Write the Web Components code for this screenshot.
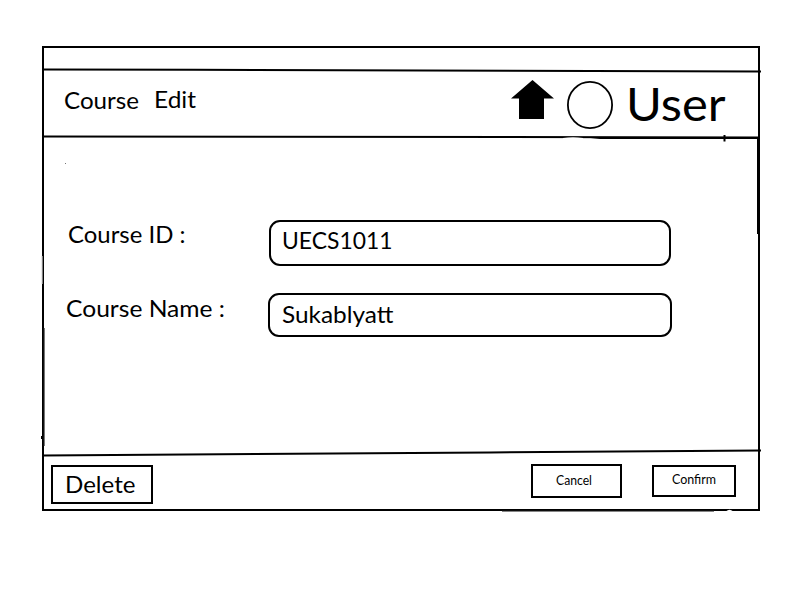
<!DOCTYPE html>
<html lang="en">
<head>
<meta charset="utf-8">
<title>Course Edit</title>
<style>
html,body{margin:0;background:#fff;color:#000;font-family:Lato,"Liberation Sans",sans-serif}
body{width:800px;height:600px;overflow:hidden}
</style>
</head>
<body>
<course-page></course-page>
<script>
// One line of text fitted to a given advance width; "base" is the baseline inside the box.
class FitText extends HTMLElement {
  connectedCallback() {
    const w = this.getAttribute('w'), h = this.getAttribute('h'), b = this.getAttribute('base'), s = this.getAttribute('size');
    this.attachShadow({mode:'open'}).innerHTML = `
      <style>:host{display:block;flex:none;width:${w}px;height:${h}px}svg{display:block;overflow:visible}
      text{font-family:Lato,"Liberation Sans",sans-serif;font-size:${s}px;white-space:pre}</style>
      <svg width="${w}" height="${h}"><text x="0" y="${b}" textLength="${w}" lengthAdjust="spacingAndGlyphs"></text></svg>`;
    this.shadowRoot.querySelector('text').textContent = this.getAttribute('label');
  }
}
customElements.define('fit-text', FitText);

// Hand-drawn divider, running slightly off the horizontal.
class SketchRule extends HTMLElement {
  connectedCallback() {
    const h = this.getAttribute('h');
    this.attachShadow({mode:'open'}).innerHTML = `
      <style>:host{display:block;flex:none;height:${h}px}svg{display:block;overflow:visible}</style>
      <svg width="714" height="${h}"><path d="${this.getAttribute('d')}" fill="none" stroke="#000" stroke-width="2"/></svg>`;
  }
}
customElements.define('sketch-rule', SketchRule);

class OutlineBox extends HTMLElement {
  constructor() {
    super();
    this.attachShadow({mode:'open'}).innerHTML = `
      <style>:host{display:flex;flex:none;box-sizing:border-box;border:2px solid #000}
      :host([round]){border-radius:11px}</style><slot></slot>`;
  }
}
customElements.define('outline-box', OutlineBox);

class UserBadge extends HTMLElement {
  constructor() {
    super();
    this.attachShadow({mode:'open'}).innerHTML = `
      <style>:host{display:flex;align-items:flex-start}
      svg{display:block;flex:none}.home{margin:8px 13px 0 0}.face{margin:9px 13px 0 0}</style>
      <svg class="home" width="43" height="39"><path d="M21.5 0 43 18.5H33V39H8V18.5H0Z"/></svg>
      <svg class="face" width="46" height="48"><ellipse cx="23" cy="24" rx="22.1" ry="23.1" fill="none" stroke="#000" stroke-width="1.8"/></svg>
      <slot></slot>`;
  }
}
customElements.define('user-badge', UserBadge);

class FormRow extends HTMLElement {
  constructor() {
    super();
    this.attachShadow({mode:'open'}).innerHTML = `
      <style>:host{display:flex;align-items:flex-start}.label{width:var(--label-width);flex:none}</style>
      <div class="label"><slot name="label"></slot></div><slot></slot>`;
  }
}
customElements.define('form-row', FormRow);

class CoursePage extends HTMLElement {
  constructor() {
    super();
    this.attachShadow({mode:'open'}).innerHTML = `
    <style>
      :host{display:block;padding:46px 0 0 42px}
      .frame{position:relative;box-sizing:border-box;width:718px;height:465px;border:2px solid #000;display:flex;flex-direction:column}
      .strip{height:21px;flex:none}
      header{height:63px;flex:none;display:flex;align-items:flex-start;padding-left:20px}
      header .edit{margin-left:15px}
      user-badge{margin-left:315px}
      main{height:311px;flex:none;box-sizing:border-box;padding:82px 0 0 22px;display:flex;flex-direction:column;gap:27px}
      .id{--label-width:201px;padding-left:2px}
      .name{--label-width:202px}
      .id outline-box{width:402px;height:46px;padding-left:10.5px}
      .name outline-box{width:404px;height:44px;padding-left:12px}
      footer{display:flex;align-items:flex-start;padding:7px 0 0 7px}
      .delete{width:102px;height:39px;margin-top:1px;padding-left:12px}
      .cancel{width:91px;height:34px;margin-left:378px;padding-left:23px}
      .confirm{width:84px;height:32px;margin:1px 0 0 30px;padding-left:18px}
      .marks{position:absolute;left:-44px;top:-48px;overflow:visible;pointer-events:none}
    </style>
    <div class="frame">
      <div class="strip"></div>
      <sketch-rule h="3" d="M-1 .6 L150 .8 L717 2.5"></sketch-rule>
      <header>
        <fit-text label="Course" w="75" h="63" base="37" size="23.5"></fit-text>
        <fit-text class="edit" label="Edit" w="42" h="63" base="36" size="23.5"></fit-text>
        <user-badge><fit-text label="User" w="99.5" h="63" base="49" size="46.8"></fit-text></user-badge>
      </header>
      <sketch-rule h="3" d="M-1 1.4 L714 2.4"></sketch-rule>
      <main>
        <form-row class="id">
          <fit-text slot="label" label="Course ID :" w="117.5" h="46" base="23" size="23.5"></fit-text>
          <outline-box round><fit-text label="UECS1011" w="110.5" h="40" base="27" size="23.5"></fit-text></outline-box>
        </form-row>
        <form-row class="name">
          <fit-text slot="label" label="Course Name :" w="159" h="44" base="24" size="23.5"></fit-text>
          <outline-box round><fit-text label="Sukablyatt" w="111.5" h="40" base="28" size="23.5"></fit-text></outline-box>
        </form-row>
      </main>
      <sketch-rule h="8" d="M-1 6.4 L446 3.4 L717 1.5"></sketch-rule>
      <footer>
        <outline-box class="delete"><fit-text label="Delete" w="70.5" h="33" base="26" size="23.5"></fit-text></outline-box>
        <outline-box class="cancel"><fit-text label="Cancel" w="36" h="28" base="19" size="12.4"></fit-text></outline-box>
        <outline-box class="confirm"><fit-text label="Confirm" w="44" h="28" base="17" size="12.4"></fit-text></outline-box>
      </footer>
      <svg class="marks" width="800" height="600" fill="none">
        <path d="M586 137.5 L600 136.9H758V138.9H600Z" fill="#000"/>
        <path d="M724.5 135v6.5" stroke="#000" stroke-width="2"/>
        <path d="M758 137V234" stroke="#000" stroke-width="2"/>
        <path d="M563 138.9q10-1.6 20 0" stroke="#fff" stroke-width="1.6"/>
        <path d="M44.3 328V446" stroke="#555" stroke-width="1"/>
        <path d="M42.2 256V284" stroke="#bbb" stroke-width="1"/>
        <path d="M41.5 436v3" stroke="#000" stroke-width="1"/>
        <path d="M502 511.4H714" stroke="#777" stroke-width="1"/>
        <path d="M726 511.3q3.5-3 7 0Z" fill="#fff"/>
        <path d="M65 163.5h1" stroke="#777" stroke-width="1"/>
      </svg>
    </div>`;
  }
}
customElements.define('course-page', CoursePage);
</script>
</body>
</html>
